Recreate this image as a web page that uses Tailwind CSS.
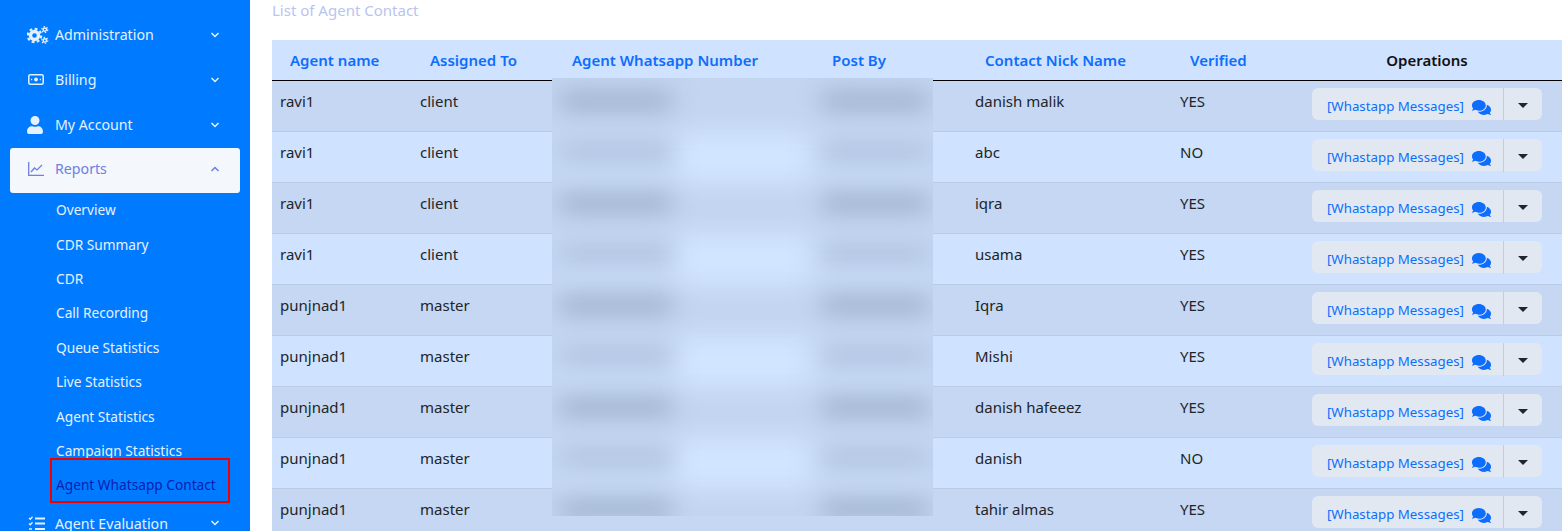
<!DOCTYPE html>
<html lang="en">
<head>
  <meta charset="UTF-8">
  <title>List of Agent Contact</title>
  <script src="https://cdn.jsdelivr.net/npm/@tailwindcss/browser@4"></script>
</head>
<body class="h-[531px] overflow-hidden bg-white font-['Noto_Sans',sans-serif]">
  <div class="flex h-[531px] overflow-hidden">
    <!-- sidebar -->
    <aside class="w-[250px] shrink-0 bg-[#007bff] px-[10px] pt-[12px] text-[#e6f1ff]">
      <a class="flex h-[45px] items-center pl-[17px] pr-[20px] text-[14.2px]">
        <svg class="w-[22px] h-[18px] mr-[6px]" viewBox="0 0 22 18" fill="none" stroke="#e6f1ff">
          <circle cx="7.500" cy="9.500" r="4" stroke-width="3.400"/>
          <circle cx="7.500" cy="9.500" r="6.700" stroke-width="2.200" stroke-dasharray="2.800 2.460"/>
          <circle cx="17.800" cy="3.600" r="1.700" stroke-width="1.500"/>
          <circle cx="17.800" cy="3.600" r="3" stroke-width="1.200" stroke-dasharray="1.400 1.740"/>
          <circle cx="17.800" cy="14.400" r="1.700" stroke-width="1.500"/>
          <circle cx="17.800" cy="14.400" r="3" stroke-width="1.200" stroke-dasharray="1.400 1.740"/>
        </svg>
        <span>Administration</span>
        <svg class="ml-auto w-[10px] h-[6px]" viewBox="0 0 10 6" fill="none" stroke="#e6f1ff" stroke-width="1.500"><path d="M1.500 1l3.500 3.500L8.500 1"/></svg>
      </a>
      <a class="flex h-[45px] items-center pl-[18px] pr-[20px] text-[14.200px]">
        <svg class="w-[16px] h-[11px] mr-[11px]" viewBox="0 0 16 11" fill="none" stroke="#e6f1ff" stroke-width="1.500"><rect x=".8" y=".8" width="14.400" height="9.400" rx="1.500"/><circle cx="8" cy="5.500" r="1.900" fill="#e6f1ff" stroke="none"/><path d="M3 5.500h1.200M11.800 5.500H13"/></svg>
        <span>Billing</span>
        <svg class="ml-auto w-[10px] h-[6px]" viewBox="0 0 10 6" fill="none" stroke="#e6f1ff" stroke-width="1.500"><path d="M1.500 1l3.500 3.500L8.500 1"/></svg>
      </a>
      <a class="flex h-[45px] items-center pl-[17px] pr-[20px] text-[14.200px]">
        <svg class="w-[16px] h-[18px] mr-[12px]" viewBox="0 0 448 512" fill="#e6f1ff"><path d="M224 256c70.700 0 128-57.300 128-128S294.700 0 224 0 96 57.300 96 128s57.300 128 128 128zm89.600 32h-16.700c-22.200 10.200-46.900 16-72.900 16s-50.600-5.800-72.900-16h-16.700C60.200 288 0 348.200 0 422.400V464c0 26.500 21.500 48 48 48h352c26.500 0 48-21.500 48-48v-41.600c0-74.200-60.200-134.400-134.400-134.400z"/></svg>
        <span>My Account</span>
        <svg class="ml-auto w-[10px] h-[6px]" viewBox="0 0 10 6" fill="none" stroke="#e6f1ff" stroke-width="1.500"><path d="M1.500 1l3.500 3.500L8.500 1"/></svg>
      </a>
      <a class="mt-[1px] flex h-[45px] items-center rounded-[3px] bg-[#f4f7fb] pb-[3px] pl-[18px] pr-[20px] text-[14.200px] text-[#6f7fe3]">
        <svg class="w-[16px] h-[14px] mr-[11px]" viewBox="0 0 16 14" fill="none" stroke="#6f7fe3" stroke-width="1.300"><path d="M.7 0v13.300H16"/><path d="M3 10l3.500-4 2.500 2 5-5"/></svg>
        <span>Reports</span>
        <svg class="ml-auto w-[10px] h-[6px]" viewBox="0 0 10 6" fill="none" stroke="#6f7fe3" stroke-width="1.500"><path d="M1.500 5L5 1.500 8.500 5"/></svg>
      </a>
      <ul class="pl-[46px] pt-[0.2px] text-[13.700px] leading-[34.400px]">
        <li>Overview</li>
        <li>CDR Summary</li>
        <li>CDR</li>
        <li>Call Recording</li>
        <li>Queue Statistics</li>
        <li>Live Statistics</li>
        <li>Agent Statistics</li>
        <li>Campaign Statistics</li>
        <li class="relative text-[#0a1fb0]">
          <div class="absolute -left-[6px] -top-[10px] h-[45px] w-[180px] border-2 border-[#f00000] bg-[#007bff]"></div>
          <span class="relative">Agent Whatsapp Contact</span>
        </li>
      </ul>
      <a class="-mt-[2px] flex h-[45px] items-center pl-[18px] pr-[20px] text-[14.200px]">
        <svg class="w-[17px] h-[15px] mr-[10px]" viewBox="0 0 17 15" fill="none" stroke="#e6f1ff"><path d="M1 2l1.300 1.300L4.500.8M1 7.500l1.300 1.300L4.500 6.300M1 13h3" stroke-width="1.300"/><path d="M7 2.500h10M7 7.500h10M7 13h10" stroke-width="2"/></svg>
        <span>Agent Evaluation</span>
        <svg class="ml-auto w-[10px] h-[6px]" viewBox="0 0 10 6" fill="none" stroke="#e6f1ff" stroke-width="1.500"><path d="M1.500 1l3.500 3.500L8.500 1"/></svg>
      </a>
    </aside>

    <!-- content -->
    <main class="relative flex-1 min-w-0 pl-[22px]">
      <h2 class="h-[40px] text-[15px] leading-[20px] text-[#b9c4f0]">List of Agent Contact</h2>
      <table class="w-[1290px] table-fixed border-collapse text-[15px] text-[#212529]">
        <colgroup>
          <col class="w-[140px]"><col class="w-[140px]"><col class="w-[272px]"><col class="w-[143px]"><col class="w-[205px]"><col class="w-[132px]"><col class="w-[258px]">
        </colgroup>
        <thead class="bg-[#cfe2ff] text-[15px] text-[#0d6efd]">
          <tr class="h-[40px] border-b border-black">
            <th class="pl-[18px] text-left font-semibold">Agent name</th>
            <th class="pl-[18px] text-left font-semibold">Assigned To</th>
            <th class="pl-[20px] text-left font-semibold">Agent Whatsapp Number</th>
            <th class="pl-[8px] text-left font-semibold">Post By</th>
            <th class="pl-[18px] text-left font-semibold">Contact Nick Name</th>
            <th class="pl-[18px] text-left font-semibold">Verified</th>
            <th class="pl-[8px] pr-[20px] text-center font-semibold text-[#111]">Operations</th>
          </tr>
        </thead>
        <tbody id="rows"></tbody>
      </table>

      <!-- blurred phone numbers / post by -->
      <div class="absolute left-[302px] top-[78px] h-[438px] w-[381px] overflow-hidden bg-[#c3d5f0]">
        <div id="blur" class="relative h-full w-full blur-[12px]"></div>
      </div>
    </main>
  </div>

  <script>
    const contacts = [
      ['ravi1', 'client', 'danish malik', 'YES'],
      ['ravi1', 'client', 'abc', 'NO'],
      ['ravi1', 'client', 'iqra', 'YES'],
      ['ravi1', 'client', 'usama', 'YES'],
      ['punjnad1', 'master', 'Iqra', 'YES'],
      ['punjnad1', 'master', 'Mishi', 'YES'],
      ['punjnad1', 'master', 'danish hafeeez', 'YES'],
      ['punjnad1', 'master', 'danish', 'NO'],
      ['punjnad1', 'master', 'tahir almas', 'YES'],
    ];
    const chat = '<svg class="h-[17px] w-[21px] shrink-0" viewBox="0 0 576 512" fill="#0d6efd"><path d="M416 192c0-88.400-93.100-160-208-160S0 103.600 0 192c0 34.300 14.100 65.900 38 92-13.400 30.200-35.500 54.200-35.800 54.500-2.200 2.300-2.800 5.700-1.500 8.700S4.800 352 8 352c36.600 0 66.900-12.300 88.700-25 32.200 15.700 70.300 25 111.300 25 114.900 0 208-71.600 208-160zm122 220c23.900-26 38-57.700 38-92 0-66.900-53.500-124.200-129.300-148.100.9 6.600 1.300 13.300 1.300 20.100 0 105.900-107.700 192-240 192-10.800 0-21.300-.8-31.700-1.900C207.800 439.600 281.800 480 368 480c41 0 79.100-9.200 111.300-25 21.800 12.700 52.100 25 88.700 25 3.200 0 6.100-1.900 7.300-4.800 1.300-2.900.7-6.300-1.500-8.700-.3-.3-22.400-24.200-35.800-54.500z"/></svg>';

    document.getElementById('rows').innerHTML = contacts.map((c, i) => `
      <tr class="h-[51px] border-b border-[#bacbe6] ${i % 2 ? 'bg-[#cfe2ff]' : 'bg-[#c5d7f2]'}">
        <td class="px-[8px] pt-[8px] align-top leading-[24px]">${c[0]}</td>
        <td class="px-[8px] pt-[8px] align-top leading-[24px]">${c[1]}</td>
        <td></td>
        <td></td>
        <td class="px-[8px] pt-[8px] align-top leading-[24px]">${c[2]}</td>
        <td class="px-[8px] pt-[8px] align-top leading-[24px]">${c[3]}</td>
        <td class="pl-[8px] pr-[20px] pt-[7px] align-top">
          <div class="flex h-[32px] rounded-[6px] bg-[#e1e8f2]">
            <span class="flex w-[191px] items-center justify-end gap-[7px] pt-[7px] pr-[11px] text-[13.300px] text-[#0d6efd]">[Whastapp Messages]${chat}</span>
            <span class="h-[33px] w-px bg-[#c3ccd8]"></span>
            <span class="flex flex-1 items-center justify-center pt-[4px]"><i class="block border-x-[5px] border-t-[5px] border-x-transparent border-t-[#212529]"></i></span>
          </div>
        </td>
      </tr>`).join('');

    // these get blurred by the wrapper, widths per row only vary a little
    document.getElementById('blur').innerHTML = contacts.map((c, i) => {
      const top = 3 + i * 51;
      const odd = i % 2;
      return `
        ${odd ? `<div class="absolute left-0 h-[51px] w-full bg-[#c8dbf7]" style="top:${top}px"></div>
        <div class="absolute left-[128px] h-[51px] w-[126px] bg-[#d2e5ff]" style="top:${top}px"></div>` : ''}
        <div class="absolute left-[8px] h-[16px] w-[112px] ${odd ? 'bg-[#a8bad7]' : 'bg-[#97a9c4]'}" style="top:${top + 12}px"></div>
        <div class="absolute left-[270px] h-[16px] w-[106px] ${odd ? 'bg-[#a8bad7]' : 'bg-[#97a9c4]'}" style="top:${top + 12}px"></div>`;
    }).join('');
  </script>
</body>
</html>
